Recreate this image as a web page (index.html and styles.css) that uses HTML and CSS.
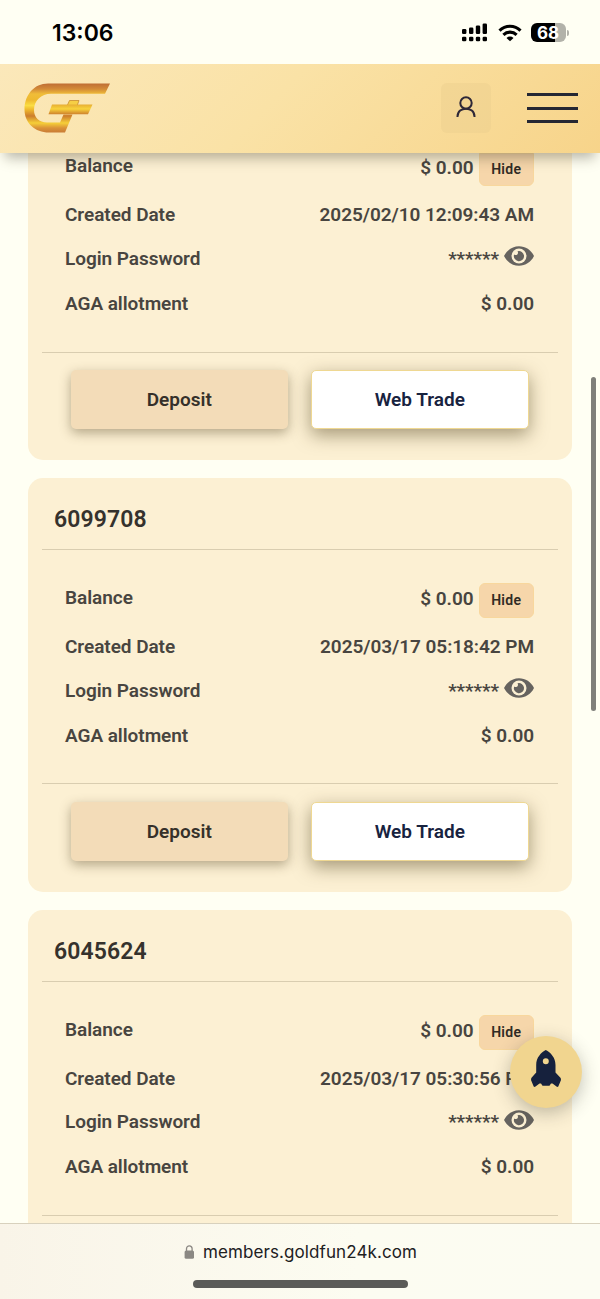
FILE: index.html
```
<!DOCTYPE html>
<html lang="en">
<head>
<meta charset="utf-8">
<title>Accounts</title>
<link rel="stylesheet" href="styles.css">
</head>
<body>
<svg class="defs" width="0" height="0" aria-hidden="true">
  <symbol id="eye" viewBox="0 0 30 20">
    <path fill="#66635f" d="M0 10C3 4 8.500 .3 15 .3S27 4 30 10C27 16 21.500 19.700 15 19.700S3 16 0 10Z"/>
    <circle cx="15" cy="10" r="7.500" fill="#fcf0d3"/>
    <path fill="#66635f" d="M13.500 5.200A5.100 5.100 0 1 1 10.100 8.500C12.300 10.300 15.200 7.700 13.500 5.200Z"/>
  </symbol>
</svg>
<div class="phone">
  <div class="status">
    <span class="time">13:06</span>
    <div class="indicators">
      <svg class="signal" width="26" height="19" viewBox="0 0 26 19">
        <rect x="0" y="6" width="4.400" height="5" rx="1.300"/><rect x="7" y="4.500" width="4.400" height="6.500" rx="1.300"/><rect x="13.800" y="2.500" width="4.400" height="8.500" rx="1.300"/><rect x="20.600" y="0.500" width="4.400" height="10.500" rx="1.300"/>
        <rect x="0" y="13.700" width="4.400" height="4.600" rx="1.300"/><rect x="7" y="13.700" width="4.400" height="4.600" rx="1.300"/><rect x="13.800" y="13.700" width="4.400" height="4.600" rx="1.300"/><rect x="20.600" y="13.700" width="4.400" height="4.600" rx="1.300"/>
      </svg>
      <svg class="wifi" width="24" height="18" viewBox="0 0 24 18" fill="none" stroke="#000" stroke-width="3.100">
        <path d="M1.500 6.600A15 15 0 0 1 22.500 6.600"/><path d="M5.400 10.800A9.500 9.500 0 0 1 18.600 10.800"/><path d="M12 17.300L8.500 13.900A5 5 0 0 1 15.500 13.900Z" fill="#000" stroke="none"/>
      </svg>
      <div class="battery"><span class="level">68</span></div><i class="cap"></i>
    </div>
  </div>
  <header class="topbar">
    <svg class="logo" width="87" height="51" viewBox="0 0 87 51">
      <defs>
        <linearGradient id="gold" x1="0" y1="0" x2="0" y2="50" gradientUnits="userSpaceOnUse">
          <stop offset="0" stop-color="#bd6b34"/><stop offset=".12" stop-color="#d38a38"/><stop offset=".22" stop-color="#f0bd38"/><stop offset=".34" stop-color="#eeb92f"/><stop offset=".45" stop-color="#fbdd43"/><stop offset=".54" stop-color="#edb52d"/><stop offset=".66" stop-color="#cc7d2d"/><stop offset=".8" stop-color="#f6cf38"/><stop offset=".9" stop-color="#da9238"/><stop offset="1" stop-color="#c77935"/>
        </linearGradient>
        <linearGradient id="bar" x1="0" y1="0" x2="0" y2="1"><stop offset="0" stop-color="#e7ad33"/><stop offset=".45" stop-color="#f8d33b"/><stop offset="1" stop-color="#ce802d"/></linearGradient>
      </defs>
      <path fill="url(#gold)" d="M24 .5H86L81 10.800H27C17 10.800 10 18 10 27C10 34.500 15 39.500 23 39.500H36L39.500 31.500H48.500L41 49.500H25C11 49.500 .5 40 .5 26.500C.5 12 10 .5 24 .5Z"/>
      <path fill="#f6cf45" stroke="#c88c30" stroke-width=".8" d="M43 23L45.500 17.500H55L53 23Z"/>
      <path fill="url(#bar)" d="M28 21.500H68.500L64 31.300H24.500Z"/>
    </svg>
    <div class="user">
      <svg width="20" height="22" viewBox="0 0 20 22" fill="none" stroke="#2e2838" stroke-width="2"><circle cx="10" cy="7" r="5.700"/><path d="M1.500 21V20.500C1.500 10 18.500 10 18.500 20.500V21"/></svg>
    </div>
    <div class="menu"><i></i><i></i><i></i></div>
  </header>
  <main class="accounts">
    <section class="card">
      <div class="rows">
        <div class="row balance"><span class="label">Balance</span><span class="value"><b>$ 0.00</b><button class="hide">Hide</button></span></div>
        <div class="row created"><span class="label">Created Date</span><span class="value date">2025/02/10 12:09:43 AM</span></div>
        <div class="row login"><span class="label">Login Password</span><span class="value"><span class="stars">******</span><svg class="eye" width="30" height="20"><use href="#eye"/></svg></span></div>
        <div class="row aga"><span class="label">AGA allotment</span><span class="value">$ 0.00</span></div>
      </div>
      <div class="actions"><button class="deposit">Deposit</button><button class="trade">Web Trade</button></div>
    </section>
    <section class="card">
      <h2>6099708</h2>
      <div class="rows">
        <div class="row balance"><span class="label">Balance</span><span class="value"><b>$ 0.00</b><button class="hide">Hide</button></span></div>
        <div class="row created"><span class="label">Created Date</span><span class="value date">2025/03/17 05:18:42 PM</span></div>
        <div class="row login"><span class="label">Login Password</span><span class="value"><span class="stars">******</span><svg class="eye" width="30" height="20"><use href="#eye"/></svg></span></div>
        <div class="row aga"><span class="label">AGA allotment</span><span class="value">$ 0.00</span></div>
      </div>
      <div class="actions"><button class="deposit">Deposit</button><button class="trade">Web Trade</button></div>
    </section>
    <section class="card">
      <h2>6045624</h2>
      <div class="rows">
        <div class="row balance"><span class="label">Balance</span><span class="value"><b>$ 0.00</b><button class="hide">Hide</button></span></div>
        <div class="row created"><span class="label">Created Date</span><span class="value date">2025/03/17 05:30:56 PM</span></div>
        <div class="row login"><span class="label">Login Password</span><span class="value"><span class="stars">******</span><svg class="eye" width="30" height="20"><use href="#eye"/></svg></span></div>
        <div class="row aga"><span class="label">AGA allotment</span><span class="value">$ 0.00</span></div>
      </div>
    </section>
  </main>
  <footer class="browser">
    <div class="address">
      <svg width="11" height="14" viewBox="0 0 11 14"><rect x=".6" y="5.500" width="9.400" height="8.300" rx="1.600" fill="#8b8883"/><path d="M2.500 6.500V3.800a2.800 2.900 0 0 1 5.600 0V6.500" fill="none" stroke="#8b8883" stroke-width="1.300"/></svg>
      <span>members.goldfun24k.com</span>
    </div>
    <div class="home"></div>
  </footer>
  <div class="scroll"></div>
  <div class="rocket">
    <svg width="30" height="38" viewBox="0 0 30 38"><path fill="#16213d" fill-rule="evenodd" d="M14.800 0C19.500 2.500 24.500 7.500 24.500 15V22.500L29.700 28L30 30L27.300 36.500Q26.500 37.300 25.500 36.500L21.500 33.500H20L18.500 35.800H11.500L10 33.500H8.500L4.500 36.500Q3.500 37.300 2.700 36.500L0 30L.3 28L5.200 22.500V15C5.200 7.500 10.100 2.500 14.800 0ZM14.800 8.300A3 3 0 1 0 14.800 14.300A3 3 0 1 0 14.800 8.300Z"/></svg>
  </div>
</div>
</body>
</html>
```
FILE: styles.css
```
* { box-sizing: border-box; }
body { margin: 0; background: #fffff3; font-family: Roboto, "Liberation Sans", sans-serif; }
.defs { position: absolute; }
.phone { position: relative; width: 600px; height: 1299px; overflow: hidden; display: flex; flex-direction: column; }

.status { height: 64px; flex: none; display: flex; justify-content: space-between; padding: 0 31px 0 52px; font-family: Inter, sans-serif; }
.time { font-size: 23px; font-weight: 600; line-height: 67px; }
.indicators { display: flex; align-items: center; padding-top: 1px; }
.signal { margin-right: 1px; }
.wifi { margin: 0 9px 0 9px; }
.battery { width: 35px; height: 19px; border-radius: 6px; background: linear-gradient(90deg, #000 68%, #b2b2a9 68%); color: #fff; text-align: center; }
.level { display: block; font-size: 17px; font-weight: 700; line-height: 20px; padding-right: 1px; }
.cap { width: 2px; height: 6px; margin-left: 1px; border-radius: 0 2px 2px 0; background: #b2b2a9; }

.topbar { height: 89px; flex: none; z-index: 2; display: flex; align-items: center; padding: 0 22px 1px 24px; background: linear-gradient(135deg, #fbe8ba 0%, #fae2a6 45%, #f7d48a 100%); box-shadow: 0 10px 12px -5px rgba(60, 55, 40, .36); }
.user { width: 50px; height: 50px; margin-left: auto; display: flex; align-items: center; justify-content: center; border-radius: 6px; background: rgba(236, 207, 143, .45); }
.user svg { margin-top: -2px; }
.menu { width: 51px; height: 30px; margin-left: 36px; display: flex; flex-direction: column; justify-content: space-between; }
.menu i { height: 3px; background: #252733; }

.accounts { flex: 1; min-height: 0; overflow: hidden; padding: 0 28px; }
.card { height: 413.700px; margin-bottom: 18px; padding: 0 14px; border-radius: 15px; background: #fcf0d3; }
/* scrolled partly under the header, its title already out of view */
.card:first-child { height: 307px; border-radius: 0 0 15px 15px; }
.card:first-child .rows { height: 200px; padding-top: 0; }
.card h2 { height: 72px; margin: 0; padding: 0 12px; border-bottom: 1.400px solid #d9cdb0; font-size: 23px; font-weight: 600; line-height: 83px; color: #35322d; letter-spacing: .1px; }
.rows { height: 234px; padding: 33px 24px 0 23px; font-size: 19px; font-weight: 600; color: #484540; letter-spacing: -.05px; border-bottom: 1.400px solid #d9cdb0; }
.row { display: flex; align-items: center; justify-content: space-between; }
.value { display: flex; align-items: center; }
.balance { height: 35px; }
.card:first-child .balance { height: 33px; }
.card:first-child .hide { border-radius: 0 0 6px 6px; height: 33px; padding-bottom: 2px; }
.balance .label { margin-top: -6px; }
.balance b { font-weight: inherit; margin-top: -4px; }
.card:first-child .balance .label { margin-top: -8px; }
.card:first-child .balance b { margin-top: -5px; }
.created { height: 57px; }
.login { height: 30px; }
.aga { height: 60px; }
.hide { width: 55.500px; height: 35px; margin-left: 5px; padding: 0 0 1px; border: 1px solid #f8d79d; border-radius: 6px; background: #f6d6aa; font: 600 14px Roboto, sans-serif; letter-spacing: .3px; color: #302b25; }
.eye { margin: -4px 0 0 5px; }
.actions { display: flex; gap: 23px; padding: 18px 29px 0 29px; }
.card:first-child .actions { padding-top: 17px; }
.actions button { flex: 1; height: 58.500px; padding: 0; border: 0; border-radius: 5px; font: 600 19px Roboto, sans-serif; }
.actions .deposit { background: #f3dcb8; color: #35302a; box-shadow: 0 4px 12px rgba(80, 65, 30, .42); }
.actions .trade { background: #fff; color: #18233f; border: 1.500px solid #efd892; box-shadow: 0 6px 18px rgba(80, 65, 30, .5); }

.browser { height: 76px; flex: none; z-index: 2; border-top: 1px solid #d8d1bd; background: linear-gradient(90deg, #f9f4e8, #fcfcf1 60%, #fcfcf2); display: flex; flex-direction: column; align-items: center; }
.address { display: flex; align-items: center; gap: 8px; height: 56px; padding-left: 1px; font: 400 17px Inter, sans-serif; letter-spacing: .1px; color: #20201e; }
.home { width: 215px; height: 8px; border-radius: 4px; background: #5b5b58; }
.scroll { position: absolute; left: 591px; top: 377px; width: 5px; height: 334px; border-radius: 3px; background: #80807b; }
.rocket { position: absolute; left: 510px; top: 1036px; width: 72px; height: 72px; border-radius: 50%; background: #f1d58f; display: flex; align-items: center; justify-content: center; padding-bottom: 6px; box-shadow: 0 5px 18px rgba(50, 50, 40, .3); }
```
